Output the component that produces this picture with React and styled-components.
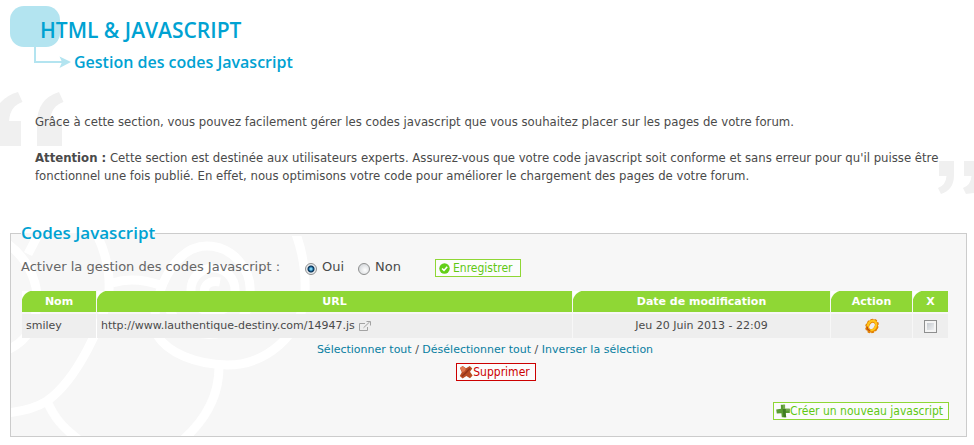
/* eslint-disable react/prop-types */
import { useState } from 'react'
import styled, { createGlobalStyle, css } from 'styled-components'


//! Global.

const GlobalStyle = createGlobalStyle`
    * {
        box-sizing: border-box;
    }

    body {
        margin: 0;
        background: #fff;
        color: #4a4a4a;
        font: 11px/18px Verdana, "DejaVu Sans", sans-serif;
    }
`

const textFont = '"DejaVu Sans Condensed", "DejaVu Sans", sans-serif'
const titleFont = '"Open Sans", "Noto Sans", sans-serif'

//! Sections.
//* Page heading

const Page = styled.main`
    padding: 0 7px 9px 10px;
    overflow: hidden;
`

const Header = styled.header`
    position: relative;
    padding: 16px 0 0 30px;
`

const HeaderMark = styled.svg`
    position: absolute;
    top: 6px;
    left: 0;
    z-index: -1;
`

const Title = styled.h1`
    margin: 0;
    color: #00a2d2;
    font: 600 21px/28px ${titleFont};
`

const SubTitle = styled.h2`
    margin: 8px 0 0 34px;
    color: #00a2d2;
    font: 600 16px/20px ${titleFont};
`

//* Quoted introduction

const Intro = styled.section`
    position: relative;
    margin-top: 41px;
    padding: 0 25px;
    font: 13px/18px ${textFont};

    > p {
        margin: 0 0 18px;
    }
`

const Quote = styled.svg`
    position: absolute;
    z-index: -1;
    fill: #f0f0f0;
    ${({ $closing }) => $closing ? css`
        right: -7px;
        bottom: -10px;
    ` : css`
        left: -10px;
        top: -21px;
    `}
`

//* Script panel

const Panel = styled.fieldset`
    position: relative;
    min-width: 0;
    margin: 38px 0 0;
    padding: 14px 17px 16px 10px;
    border: 1px solid #ccc;
    background: #f7f7f7;
`

const Legend = styled.legend`
    position: relative;
    z-index: 1;
    padding: 0;
    color: #00a2d2;
    font: 600 17px/20px ${titleFont};
`

const Swirls = styled.svg`
    position: absolute;
    left: 0;
    bottom: 0;
    fill: none;
    stroke: #fff;
    stroke-width: 9;
`

const PanelBody = styled.div`
    position: relative;
`

const Setting = styled.div`
    display: flex;
    align-items: center;
    margin-bottom: 12px;
    color: #666;
    font-size: 13px;
`

const SettingName = styled.span`
    flex: 0 0 284px;
`

const Choice = styled.label`
    display: flex;
    align-items: center;
    gap: 5px;
    margin-right: 14px;
    color: #4a4a4a;
`

const Radio = styled.input`
    appearance: none;
    width: 12px;
    height: 12px;
    margin: 3px 0 0;
    border: 1px solid #8e8f8f;
    border-radius: 50%;
    background: radial-gradient(circle at 60% 60%, #fff, #c9cdd1);

    &:checked {
        background: radial-gradient(circle, #7fd0f0 0 1px, #17679c 2px, #0b2f50 3px, #e8ecef 4px);
    }
`

const Check = styled.input`
    appearance: none;
    display: block;
    width: 13px;
    height: 13px;
    margin: 0 auto;
    border: 1px solid #8e8f8f;
    background: linear-gradient(135deg, #b9bfc6, #fbfbfb);
    box-shadow: inset 0 0 0 2px #f4f4f4;

    &:checked {
        background: #17679c;
    }
`

const Button = styled.button`
    display: inline-flex;
    align-items: center;
    height: 18px;
    padding: 0 5px 0 2px;
    border: 1px solid ${({ $danger }) => $danger ? '#c00' : '#8fd735'};
    background: #fcfcfc;
    color: ${({ $danger }) => $danger ? '#c00' : '#5fc813'};
    font: 12px/16px ${textFont};
    white-space: nowrap;
    cursor: pointer;
`

const SaveButton = styled(Button)`
    gap: 3px;
    margin: 2px 0 0 20px;
    padding: 0 8px 0 3px;
`

//* Table

const Table = styled.table`
    width: 100%;
    table-layout: fixed;
    border-spacing: 1px 2px;
`

const Head = styled.th`
    width: ${({ $width }) => $width || 'auto'};
    height: 21px;
    padding: 0;
    background: radial-gradient(circle at 100% 100%, #8fd735 12px, #fff 13px) 0 0 / 12px 12px no-repeat,
        linear-gradient(#8fd735, #8fd735) 12px 0 no-repeat,
        linear-gradient(#8fd735, #8fd735) 0 12px no-repeat;
    color: #fff;
    line-height: 21px;
`

const Cell = styled.td`
    height: 24px;
    padding: 0 4px;
    background: #eee;
    text-align: ${({ $center }) => $center ? 'center' : 'left'};
    vertical-align: middle;
`

const UrlLink = styled.a`
    display: inline-flex;
    align-items: center;
    gap: 4px;
    color: inherit;
    text-decoration: none;
`

const EditLink = styled.a`
    display: flex;
    justify-content: center;
`

const Selection = styled.nav`
    margin-top: 1px;
    color: #4a4a4a;
    text-align: center;

    > a {
        color: #087ea1;
        text-decoration: none;
    }

    > a:hover {
        text-decoration: underline;
    }
`

const Actions = styled.div`
    display: flex;
    justify-content: ${({ $end }) => $end ? 'flex-end' : 'center'};
    margin-top: ${({ $end }) => $end ? '21px' : '4px'};
    padding-left: 22px;
`

//! Icons.

const SavedIcon = () => (
    <svg width="11" height="11" viewBox="0 0 11 11" aria-hidden="true">
        <circle cx="5.5" cy="5.5" r="5.2" fill="#62cf18" />
        <path d="M3 5.5 5 7.4 8.2 3.7" fill="none" stroke="#fff" strokeWidth="1.6" />
    </svg>
)

const DeleteIcon = () => (
    <svg width="14" height="14" viewBox="0 0 14 14" aria-hidden="true">
        <path d="M1 3 3.6 1 7 3.2 10.8 1 13.3 3.4 11 6.8 13.6 10.6 11 13.2 7.4 11 3.6 13.4.8 11 2.8 7.2Z" fill="#b94d24" />
        <path d="M1 3 3.6 1 7 3.8 5.6 6.2 3.4 7.2Z" fill="#e07850" />
        <path d="M3 11.3 7 7.6 10.8 3.5" fill="none" stroke="#96351a" strokeWidth="1.5" />
    </svg>
)

const AddIcon = () => (
    <svg width="14" height="14" viewBox="0 0 14 14" aria-hidden="true">
        <path d="M4.8.8h4.3v3.9h4.7v4.2H9.6l.6 4.4H5.8l-.4-4.1L.8 9.6.2 5.6l4.8-.8Z" fill="#599b32" />
        <path d="M7 .8h2v4l4.7-.1v2.1H7Z" fill="#74ab4c" />
        <path d="M6.6 5h3.2v3.9h-.2l.6 4.4H7.6Z" fill="#3f7c22" />
    </svg>
)

const ExternalIcon = () => (
    <svg width="12" height="11" viewBox="0 0 12 11" fill="none" stroke="#a3a3a3" aria-hidden="true">
        <path d="M6 2.5H.5v7h8V6" />
        <path d="M4.5 6.8 10.7.9M7.5.5h4v4" />
    </svg>
)

const GearIcon = () => (
    <svg width="16" height="16" viewBox="0 0 16 16" aria-hidden="true">
        <g transform="rotate(32 8 8)" fill="none">
            <ellipse cx="8" cy="8" rx="5.3" ry="6.6" stroke="#d97a00" strokeWidth="2.2" strokeDasharray="2.4 1.4" />
            <ellipse cx="8" cy="8" rx="4.1" ry="5.2" stroke="#e88400" strokeWidth="3.4" />
            <ellipse cx="7.7" cy="7.6" rx="3.9" ry="5" stroke="#ffc61a" strokeWidth="2.2" />
            <path d="M4.2 11c1.2 2 3.2 2.5 4.8 1.8" stroke="#bf4e12" strokeWidth="1.5" />
        </g>
    </svg>
)

//! App.

const scripts = [
    {
        name: 'smiley',
        url: 'http://www.lauthentique-destiny.com/14947.js',
        date: 'Jeu 20 Juin 2013 - 22:09',
    },
]

const App = () => {
    const [enabled, setEnabled] = useState(true)
    const [selected, setSelected] = useState([])

    const select = (e, next) => {
        e.preventDefault()
        setSelected(scripts.map((s) => s.name).filter(next))
    }
    const toggle = (name) => setSelected(
        selected.includes(name) ? selected.filter((n) => n !== name) : [...selected, name]
    )

    return (
        <Page>
            <GlobalStyle />
            <Header>
                <HeaderMark width="62" height="64" viewBox="0 0 62 64" aria-hidden="true">
                    <rect width="50" height="41" rx="14" fill="#b3e4f0" />
                    <path d="M25 41v15h28" fill="none" stroke="#b3e4f0" strokeWidth="2" />
                    <path d="M49.5 50.5 61 56l-11.5 6 2.5-6Z" fill="#b3e4f0" />
                </HeaderMark>
                <Title>HTML &amp; JAVASCRIPT</Title>
                <SubTitle>Gestion des codes Javascript</SubTitle>
            </Header>

            <Intro>
                <Quote width="64" height="54" viewBox="0 0 64 54" aria-hidden="true">
                    <path d="M0 11Q7 3 18 0L22.5 10Q10 14 9 29H21V54H0Z" />
                    <path d="M37 54V31Q37 7 59 0L63.5 10Q51 14 50 29H62V54Z" />
                </Quote>
                <Quote $closing width="36" height="34" viewBox="0 0 36 34" aria-hidden="true">
                    <path d="M1 0H16V14Q16 29 3 33L0 27Q8 24 8.5 15H1Z" />
                    <path d="M26 0H36V32L28 33 25 27Q33 24 33.5 15H26Z" />
                </Quote>
                <p>
                    Grâce à cette section, vous pouvez facilement gérer les codes javascript que vous
                    souhaitez placer sur les pages de votre forum.
                </p>
                <p>
                    <b>Attention :</b> Cette section est destinée aux utilisateurs experts. Assurez-vous
                    que votre code javascript soit conforme et sans erreur pour qu&apos;il puisse être
                    fonctionnel une fois publié. En effet, nous optimisons votre code pour améliorer le
                    chargement des pages de votre forum.
                </p>
            </Intro>

            <Panel>
                <Legend>Codes Javascript</Legend>
                <Swirls width="300" height="200" viewBox="11 235 300 200" aria-hidden="true">
                    <path d="M94 228C106 250 110 270 109 290C104 320 78 378 47 400Q31 410 5 412" />
                    <path d="M5 241C24 254 34 272 37 292C38 320 30 340 5 350M40 230 28 253" />
                    <path d="M47 400C54 416 62 426 78 438M112 282Q134 275 160 284" />
                    <path d="M294 228C303 250 306 270 305 292C302 335 265 364 227 364C195 363 168 352 157 334" />
                    <path d="M157 334C148 314 166 245 207 245C232 245 252 268 250 292C248 350 166 345 166 290" />
                    <path d="M219 366C219 395 206 418 184 438" />
                    <path d="M207 300C200 284 209 279 220 281" />
                    <circle cx="213" cy="289" r="22" />
                </Swirls>

                <PanelBody>
                    <Setting role="radiogroup" aria-labelledby="enable-name">
                        <SettingName id="enable-name">Activer la gestion des codes Javascript :</SettingName>
                        <Choice>
                            <Radio type="radio" name="enable" checked={enabled} onChange={() => setEnabled(true)} />
                            Oui
                        </Choice>
                        <Choice>
                            <Radio type="radio" name="enable" checked={!enabled} onChange={() => setEnabled(false)} />
                            Non
                        </Choice>
                        <SaveButton type="button"><SavedIcon />Enregistrer</SaveButton>
                    </Setting>

                    <Table>
                        <thead>
                            <tr>
                                <Head $width="74px">Nom</Head>
                                <Head>URL</Head>
                                <Head $width="257px">Date de modification</Head>
                                <Head $width="81px">Action</Head>
                                <Head $width="35px">X</Head>
                            </tr>
                        </thead>
                        <tbody>
                            {scripts.map(({ name, url, date }) => (
                                <tr key={name}>
                                    <Cell>{name}</Cell>
                                    <Cell>
                                        <UrlLink href={url}>{url}<ExternalIcon /></UrlLink>
                                    </Cell>
                                    <Cell $center>{date}</Cell>
                                    <Cell $center>
                                        <EditLink href="#edit" aria-label={`Modifier ${name}`}><GearIcon /></EditLink>
                                    </Cell>
                                    <Cell $center>
                                        <Check
                                            type="checkbox"
                                            aria-label={name}
                                            checked={selected.includes(name)}
                                            onChange={() => toggle(name)}
                                        />
                                    </Cell>
                                </tr>
                            ))}
                        </tbody>
                    </Table>

                    <Selection>
                        <a href="#all" onClick={(e) => select(e, () => true)}>Sélectionner tout</a>
                        {' / '}
                        <a href="#none" onClick={(e) => select(e, () => false)}>Désélectionner tout</a>
                        {' / '}
                        <a href="#invert" onClick={(e) => select(e, (n) => !selected.includes(n))}>Inverser la sélection</a>
                    </Selection>
                    <Actions>
                        <Button type="button" $danger><DeleteIcon />Supprimer</Button>
                    </Actions>
                    <Actions $end>
                        <Button type="button"><AddIcon />Créer un nouveau javascript</Button>
                    </Actions>
                </PanelBody>
            </Panel>
        </Page>
    )
}

export default App
